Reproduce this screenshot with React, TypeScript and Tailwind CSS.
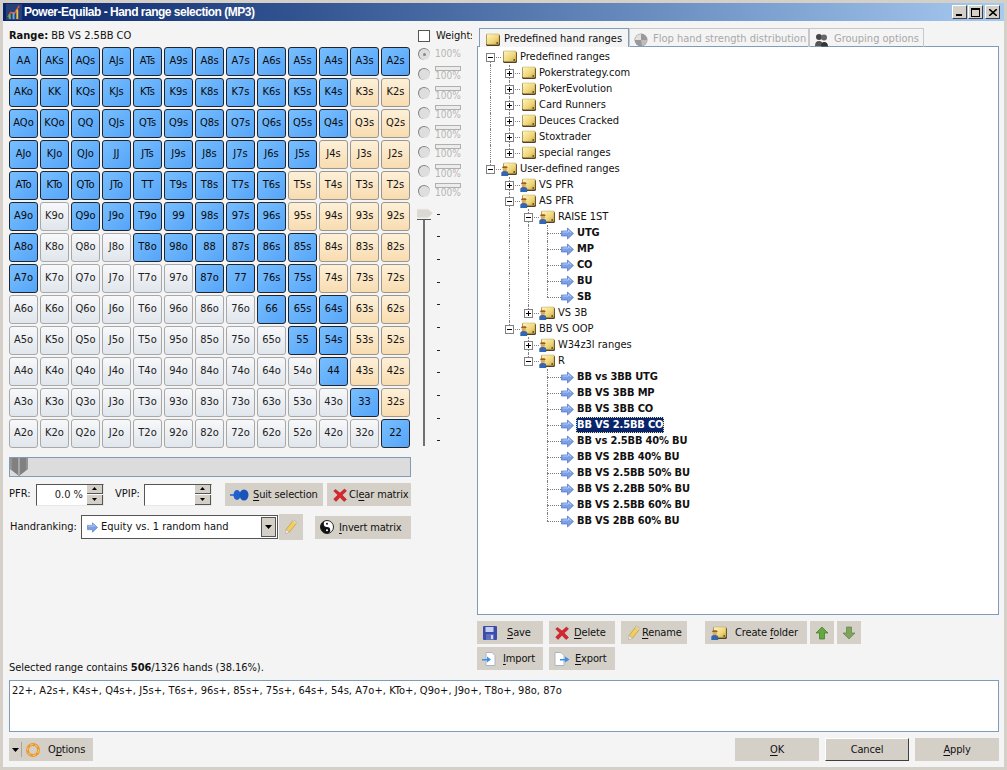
import React from "react";

const RANKS = ["A","K","Q","J","T","9","8","7","6","5","4","3","2"];
const pairMin = 12;
const suitedMax: Record<string, number> = {A:12,K:10,Q:10,J:9,T:8,"9":8,"8":9,"7":9,"6":10,"5":10};
const offMax: Record<string, number> = {A:7,K:4,Q:5,J:5,T:6,"9":6,"8":7};

function handOn(r: number, c: number) {
  if (r === c) return r <= pairMin;
  if (r < c) return c <= (suitedMax[RANKS[r]] ?? -1);
  return r <= (offMax[RANKS[c]] ?? -1);
}

const FONT = "font-['DejaVu_Sans_Condensed','Liberation_Sans',sans-serif]";

function Folder({ user }: { user?: boolean }) {
  return (
    <svg width="17" height="14" viewBox="0 0 17 14" className="shrink-0">
      <defs>
        <linearGradient id="fg" x1="0" y1="0" x2="1" y2="1">
          <stop offset="0" stopColor="#fff4c4" />
          <stop offset="0.6" stopColor="#f0d676" />
          <stop offset="1" stopColor="#c8a850" />
        </linearGradient>
      </defs>
      <path d="M2 1.5 H15 L16 2.5 V12 L15 13 H3 L2 12 Z" fill="#4e4020" />
      <rect x="2.5" y="1" width="12.5" height="10.5" rx="1" fill="url(#fg)" stroke="#b8a060" strokeWidth="0.5" />
      <circle cx="13.2" cy="10" r="0.9" fill="#6a4e18" />
      {user && (
        <g>
          <circle cx="3.8" cy="7" r="2.3" fill="#dca862" />
          <path d="M0.8 6 H6.8 L5.6 4.2 H2 Z" fill="#9a6222" />
          <path d="M0.3 14 V11 Q0.3 9 3.8 9 Q7.2 9 7.2 11 V14 Z" fill="#3566b0" />
        </g>
      )}
    </svg>
  );
}

function BlueArrow({ size = 13 }: { size?: number }) {
  return (
    <svg width={size} height={size} viewBox="0 0 13 13" className="shrink-0">
      <path d="M0.5 4 H6.5 V1 L12.5 6.5 L6.5 12 V9 H0.5 Z" fill="#7a9eea" stroke="#5273b8" strokeWidth="0.7" />
      <path d="M1.5 5 H7.5 V3 L10 5.8" fill="none" stroke="#bcd0f6" strokeWidth="0.9" />
    </svg>
  );
}

function RedX({ size = 14 }: { size?: number }) {
  return (
    <svg width={size} height={size} viewBox="0 0 14 14" className="shrink-0">
      <path d="M2.5 1.5 L7 5 L11.5 1 L13.5 3 L9.2 7 L13.5 11.5 L11 13.5 L7 9.2 L3 13.5 L0.7 11 L4.8 7 L0.7 3 Z" fill="#d8262c" stroke="#a01418" strokeWidth="0.5" />
    </svg>
  );
}

function Pencil() {
  return (
    <svg width="14" height="16" viewBox="0 0 14 16" className="shrink-0">
      <path d="M9.5 1 L13 3.5 L5.5 13 L2 10.5 Z" fill="#f2cf5a" stroke="#b0903a" strokeWidth="0.6" />
      <path d="M2 10.5 L5.5 13 L1.5 15 Z" fill="#f0ece2" stroke="#a9a294" strokeWidth="0.5" />
      <path d="M9.5 1 L13 3.5 L12 5 L8.5 2.4 Z" fill="#d9d3cb" />
    </svg>
  );
}

function Btn({ className, icon, children }: { className: string; icon?: React.ReactNode; children?: React.ReactNode }) {
  return (
    <div className={`h-[23px] bg-[#d4d0c8] flex items-center shrink-0 text-[#111] tracking-[-0.15px] ${className}`}>
      {icon}
      {children && <span className="pt-[2px]">{children}</span>}
    </div>
  );
}

const U = ({ children }: { children: string }) => <span className="underline underline-offset-2">{children}</span>;

function Spin({ value, w }: { value: string; w: string }) {
  return (
    <div className={`h-[22px] ${w} shrink-0 flex bg-white border border-t-[#555] border-l-[#555] border-r-[#e8e8e8] border-b-[#e8e8e8]`}>
      <div className="flex-1 text-right pr-1 leading-[19px] text-[#222]">{value}</div>
      <div className="w-[16px] flex flex-col gap-px bg-white">
        <div className="flex-1 bg-[#d4d0c8] flex items-center justify-center border-r border-b border-[#555]">
          <svg width="5" height="3" viewBox="0 0 5 3"><path d="M2.5 0 L5 3 H0 Z" fill="#000" /></svg>
        </div>
        <div className="flex-1 bg-[#d4d0c8] flex items-center justify-center border-r border-b border-[#555]">
          <svg width="5" height="3" viewBox="0 0 5 3"><path d="M0 0 H5 L2.5 3 Z" fill="#000" /></svg>
        </div>
      </div>
    </div>
  );
}

type Node = { l: number; t: string; k: "f" | "u" | "a"; e?: "+" | "-" };
const TREE: Node[] = [
  { l: 0, t: "Predefined ranges", k: "f", e: "-" },
  { l: 1, t: "Pokerstrategy.com", k: "f", e: "+" },
  { l: 1, t: "PokerEvolution", k: "f", e: "+" },
  { l: 1, t: "Card Runners", k: "f", e: "+" },
  { l: 1, t: "Deuces Cracked", k: "f", e: "+" },
  { l: 1, t: "Stoxtrader", k: "f", e: "+" },
  { l: 1, t: "special ranges", k: "f", e: "+" },
  { l: 0, t: "User-defined ranges", k: "u", e: "-" },
  { l: 1, t: "VS PFR", k: "u", e: "+" },
  { l: 1, t: "AS PFR", k: "u", e: "-" },
  { l: 2, t: "RAISE 1ST", k: "u", e: "-" },
  { l: 3, t: "UTG", k: "a" },
  { l: 3, t: "MP", k: "a" },
  { l: 3, t: "CO", k: "a" },
  { l: 3, t: "BU", k: "a" },
  { l: 3, t: "SB", k: "a" },
  { l: 2, t: "VS 3B", k: "u", e: "+" },
  { l: 1, t: "BB VS OOP", k: "u", e: "-" },
  { l: 2, t: "W34z3l ranges", k: "u", e: "+" },
  { l: 2, t: "R", k: "u", e: "-" },
  { l: 3, t: "BB vs 3BB UTG", k: "a" },
  { l: 3, t: "BB VS 3BB MP", k: "a" },
  { l: 3, t: "BB VS 3BB CO", k: "a" },
  { l: 3, t: "BB VS 2.5BB CO", k: "a" },
  { l: 3, t: "BB vs 2.5BB 40% BU", k: "a" },
  { l: 3, t: "BB VS 2BB 40% BU", k: "a" },
  { l: 3, t: "BB VS 2.5BB 50% BU", k: "a" },
  { l: 3, t: "BB VS 2.2BB 50% BU", k: "a" },
  { l: 3, t: "BB VS 2.5BB 60% BU", k: "a" },
  { l: 3, t: "BB VS 2BB 60% BU", k: "a" },
];

function hasNextSibling(i: number, level: number) {
  for (let j = i + 1; j < TREE.length; j++) {
    if (TREE[j].l < level) return false;
    if (TREE[j].l === level) return true;
  }
  return false;
}

function TreeRow({ i }: { i: number }) {
  const n = TREE[i];
  const selected = n.t === "BB VS 2.5BB CO";
  const cells = [];
  for (let k = 0; k <= n.l; k++) {
    const own = k === n.l;
    const through = hasNextSibling(i, k);
    cells.push(
      <div key={k} className="w-[19px] h-4 relative shrink-0">
        {!own && through && <div className="absolute left-[9px] top-0 h-4 border-l border-dotted border-[#808080]" />}
        {own && (
          <>
            <div className={`absolute left-[9px] border-l border-dotted border-[#808080] ${i === 0 ? "top-2 h-2" : through ? "top-0 h-4" : "top-0 h-2"}`} />
            <div className={`absolute left-[9px] top-2 border-t border-dotted border-[#808080] ${n.k === "a" ? "w-[14px]" : "w-[11px]"}`} />
            {n.e && (
              <div className="absolute left-[5px] top-1 w-[9px] h-[9px] bg-white border border-[#808080] flex items-center justify-center">
                <div className="w-[5px] h-px bg-black relative">
                  {n.e === "+" && <div className="absolute left-[2px] top-[-2px] w-px h-[5px] bg-black" />}
                </div>
              </div>
            )}
          </>
        )}
      </div>
    );
  }
  return (
    <div className="flex h-4 items-center">
      {cells}
      <div className="w-[20px] shrink-0 flex items-center pl-[1px]">
        {n.k === "a" ? <span className="ml-[3px]"><BlueArrow /></span> : <Folder user={n.k === "u"} />}
      </div>
      <span
        className={`whitespace-nowrap leading-4 h-4 ${n.k === "a" ? "font-bold tracking-[-0.15px]" : ""} ${
          selected ? "bg-[#0a246a] text-white outline-1 outline-dotted outline-[#e0e0a0] -outline-offset-1 px-px -mx-px" : "text-[#111]"
        }`}
      >
        {n.t}
      </span>
    </div>
  );
}

function Tab({ label, active, w, icon }: { label: string; active?: boolean; w: string; icon: React.ReactNode }) {
  return (
    <div
      className={`h-[19px] ${w} flex items-center pt-[3px] pl-[4px] border border-b-0 whitespace-nowrap shrink-0 ${
        active ? "gap-[3px] border-[#7f9db9] bg-[#f4f4f4] text-[#111] relative z-10" : "gap-[5px] border-[#c8c8c8] text-[#a8a8a8] mt-[1px]"
      }`}
    >
      {icon}
      {label}
    </div>
  );
}

export default function App() {
  return (
    <div className={`w-[1007px] h-[770px] overflow-hidden flex flex-col bg-[#d4d0c8] text-[11px] ${FONT}`}>
      {/* title bar */}
      <div className="h-[18px] mx-[3px] mt-[3px] shrink-0 flex items-center bg-gradient-to-r from-[#0a246a] to-[#a6caf0]">
        <svg width="16" height="16" viewBox="0 0 17 17" className="ml-[3px] shrink-0">
          <rect width="17" height="17" fill="#27407a" />
          <path d="M2 14 L5 9 L9 10 L14 2" stroke="#e05a3a" strokeWidth="1.6" fill="none" />
          <rect x="3" y="11" width="2" height="5" fill="#5ec05e" />
          <rect x="7" y="9" width="2" height="7" fill="#6ab0e0" />
          <rect x="11" y="6" width="2" height="10" fill="#f0c040" />
        </svg>
        <span className="ml-[2px] text-white font-bold text-[12px] tracking-[-0.5px] font-['Liberation_Sans',sans-serif] whitespace-nowrap">Power-Equilab - Hand range selection (MP3)</span>
        <div className="ml-auto flex items-center gap-px mr-[4px]">
          {["min", "max", "close"].map((b) => (
            <div
              key={b}
              className={`w-[15px] h-[14px] bg-[#d4d0c8] border border-t-white border-l-white border-r-[#404040] border-b-[#404040] flex items-center justify-center ${b === "close" ? "ml-[1px]" : ""}`}
            >
              {b === "min" && <div className="w-[6px] h-[2px] bg-black mt-[6px] mr-[2px]" />}
              {b === "max" && <div className="w-[9px] h-[9px] border border-black border-t-2" />}
              {b === "close" && (
                <svg width="8" height="7" viewBox="0 0 8 7"><path d="M0 0 L8 7 M8 0 L0 7" stroke="#000" strokeWidth="1.6" /></svg>
              )}
            </div>
          ))}
        </div>
      </div>

      {/* client */}
      <div className="flex-1 mx-[3px] mb-[3px] min-h-0 bg-[#f4f4f4] flex flex-col pt-[2px] pl-[6px] pr-[5px]">
        <div className="flex h-[654px] shrink-0">
          {/* left */}
          <div className="w-[468px] shrink-0 flex flex-col">
            <div className="flex">
              <div className="w-[408px] shrink-0">
                <div className="h-[24px] pt-[6px] leading-[14px] text-[#111] whitespace-nowrap">
                  <b>Range:</b> BB VS 2.5BB CO
                </div>
                <div className="grid grid-cols-[repeat(13,29px)] grid-rows-[repeat(13,29px)] gap-[2px]">
                  {RANKS.map((_, r) =>
                    RANKS.map((_, c) => {
                      const name = r === c ? RANKS[r] + RANKS[r] : r < c ? RANKS[r] + RANKS[c] + "s" : RANKS[c] + RANKS[r] + "o";
                      const on = handOn(r, c);
                      const style = on
                        ? "bg-gradient-to-br from-[#78bfff] to-[#55a4f8] border-[#20242c] text-[#0a0a0a]"
                        : r < c
                          ? "bg-gradient-to-b from-[#fdf0d8] to-[#f8dcb0] border-[#9a968e] text-[#111]"
                          : "bg-gradient-to-b from-[#f7f8fa] to-[#e0e6ec] border-[#a8a8a8] text-[#222]";
                      return (
                        <div key={name} className={`w-[29px] h-[29px] rounded-[3px] border flex items-center justify-center ${style}`}>
                          {name}
                        </div>
                      );
                    })
                  )}
                </div>
                <div className="mt-[9px] h-[20px] w-[402px] border border-[#7f9db9] bg-[#dcdcdc] flex">
                  <svg width="19" height="18" viewBox="0 0 19 18" className="shrink-0">
                    <path d="M0 0 H18 V11 L9 18 L0 11 Z" fill="#808080" />
                    <path d="M9 0 V17" stroke="#d0d0d0" strokeWidth="1" />
                    <path d="M1 0 V11 M17 0 V11" stroke="#a8a8a8" strokeWidth="1" />
                  </svg>
                </div>
                <div className="mt-[6px] flex items-center h-[23px]">
                  <span className="w-[27px] shrink-0 text-[#111]">PFR:</span>
                  <Spin value="0.0 %" w="w-[68px]" />
                  <span className="ml-[11px] w-[29px] shrink-0 text-[#111]">VPIP:</span>
                  <Spin value="" w="w-[68px]" />
                  <Btn className="ml-[13px] w-[98px] pl-[5px] gap-[4px]" icon={
                    <svg width="19" height="12" viewBox="0 0 19 12" className="shrink-0">
                      <path d="M0 6 H4" stroke="#2060c8" strokeWidth="1.5" />
                      <ellipse cx="7" cy="6" rx="3.5" ry="5" fill="#1f5fd0" />
                      <ellipse cx="14" cy="6" rx="4.5" ry="5.5" fill="#1a52bc" />
                    </svg>
                  }><span className="whitespace-nowrap"><U>S</U>uit selection</span></Btn>
                  <Btn className="ml-[4px] w-[84px] pl-[6px] gap-[2px]" icon={<RedX />}><span className="whitespace-nowrap">Cl<U>e</U>ar matrix</span></Btn>
                </div>
                <div className="mt-[9px] flex items-center h-[24px]">
                  <span className="w-[72px] shrink-0 pl-[1px] text-[#111]">Handranking:</span>
                  <div className="w-[197px] h-[24px] shrink-0 border border-[#555] bg-white flex items-center">
                    <span className="ml-[5px] mr-[3px]"><BlueArrow size={11} /></span>
                    <span className="flex-1 whitespace-nowrap text-[#111]">Equity vs. 1 random hand</span>
                    <div className="w-[15px] h-[20px] mr-[1px] bg-[#d4d0c8] border border-[#555] flex items-center justify-center">
                      <svg width="7" height="4" viewBox="0 0 7 4"><path d="M0 0 H7 L3.5 4 Z" fill="#000" /></svg>
                    </div>
                  </div>
                  <Btn className="ml-[1px] w-[24px] h-[26px] justify-center" icon={<Pencil />} />
                  <Btn className="ml-[12px] w-[96px] pl-[5px] gap-[5px]" icon={
                    <svg width="14" height="14" viewBox="0 0 14 14" className="shrink-0">
                      <circle cx="7" cy="7" r="6.5" fill="#fff" stroke="#222" />
                      <path d="M7 .5 A6.5 6.5 0 0 0 7 13.5 A3.25 3.25 0 0 0 7 7 A3.25 3.25 0 0 1 7 .5 Z" fill="#111" />
                      <circle cx="7" cy="3.7" r="1" fill="#111" />
                      <circle cx="7" cy="10.3" r="1" fill="#fff" />
                    </svg>
                  }><span className="whitespace-nowrap"><U>I</U>nvert matrix</span></Btn>
                </div>
              </div>
              {/* weights */}
              <div className="w-[60px] shrink-0 pt-[7px] pl-[1px] overflow-hidden">
                <div className="flex items-center gap-[6px] h-[12px]">
                  <div className="w-[12px] h-[12px] bg-white border border-[#555] shrink-0" />
                  <span className="text-[#111] whitespace-nowrap w-[36px] overflow-hidden">Weights</span>
                </div>
                <div className="mt-[4px] flex flex-col gap-[3.5px]">
                  {[0, 1, 2, 3, 4, 5, 6, 7].map((i) => (
                    <div key={i} className="flex items-center gap-[5px] h-[16px]">
                      <div className="w-[12px] h-[12px] rounded-full bg-[#dedede] border-t border-l border-[#808080] flex items-center justify-center shrink-0">
                        {i === 0 && <div className="w-[3px] h-[3px] rounded-full bg-[#888]" />}
                      </div>
                      <div className="w-[26px] text-[10px] leading-[10px] text-[#b4b4b4]">
                        {i !== 0 && <div className="h-[5px] border border-[#b0b0b0] bg-[#ececec]" />}
                        100%
                      </div>
                    </div>
                  ))}
                </div>
                <div className="mt-[9px] flex h-[238px]">
                  <div className="w-[11px] flex flex-col items-center">
                    <svg width="19" height="12" viewBox="0 0 19 12" className="shrink-0 ml-[2px]">
                      <path d="M0 1 H13 L18 5 L13 10 H0 Z" fill="#dcd9d2" stroke="#eee" />
                      <path d="M0 11.5 H16" stroke="#555" strokeWidth="1" />
                    </svg>
                    <div className="w-[2px] h-[226px] bg-[#707070] shrink-0" />
                  </div>
                  <div className="ml-[8px] pt-[6px] flex flex-col justify-between h-[234px]">
                    {Array.from({ length: 11 }).map((_, i) => (
                      <div key={i} className="w-[3px] h-px bg-[#222]" />
                    ))}
                  </div>
                </div>
              </div>
            </div>
            <div className="mt-auto pb-[2px] leading-[14px] text-[#111] whitespace-nowrap tracking-[-0.05px]">
              Selected range contains <b>506</b>/1326 hands (38.16%).
            </div>
          </div>
          {/* right */}
          <div className="flex-1 min-w-0 flex flex-col pt-[6px]">
            <div className="flex ml-[2px] h-[18px] items-end relative z-10">
              <Tab active w="w-[150px]" label="Predefined hand ranges" icon={<Folder />} />
              <Tab w="w-[180px]" label="Flop hand strength distribution" icon={
                <svg width="14" height="14" viewBox="0 0 14 14" className="shrink-0"><circle cx="7" cy="7" r="6.5" fill="#999" /><path d="M1 7 A6 6 0 0 1 7 1 V7 Z" fill="#e0e0e0" /><path d="M7 7 H13 A6 6 0 0 1 8 13 Z" fill="#bcbcbc" /></svg>
              } />
              <Tab w="w-[115px]" label="Grouping options" icon={
                <svg width="15" height="14" viewBox="0 0 15 14" className="shrink-0"><circle cx="5" cy="4" r="3" fill="#444" /><circle cx="10" cy="4.5" r="3" fill="#666" /><path d="M1 13 Q1 8 5 8 Q9 8 9 13 Z" fill="#555" /><path d="M7 13.5 Q7 9 10 9 Q14 9 14 13.5 Z" fill="#333" /></svg>
              } />
            </div>
            <div className="h-[569px] -mt-[1px] border border-[#7f9db9] bg-white pl-[3px] pt-[2px] overflow-hidden">
              {TREE.map((_, i) => <TreeRow key={i} i={i} />)}
            </div>
            <div className="mt-[6px] flex">
              <Btn className="w-[66px] pl-[6px] gap-[10px]" icon={
                <svg width="14" height="14" viewBox="0 0 14 14" className="shrink-0"><rect width="14" height="14" rx="1" fill="#3c4ca8" /><rect x="2.5" y="1" width="8" height="5" fill="#c8d0f0" /><rect x="3" y="8" width="8" height="6" fill="#6070c0" /><rect x="8" y="9" width="2" height="4" fill="#d0d8f0" /></svg>
              }><U>S</U>ave</Btn>
              <Btn className="ml-[6px] w-[66px] pl-[6px] gap-[5px]" icon={<RedX />}><U>D</U>elete</Btn>
              <Btn className="ml-[6px] w-[66px] pl-[6px] gap-[1px]" icon={<Pencil />}><U>R</U>ename</Btn>
              <Btn className="ml-[18px] w-[102px] pl-[6px] gap-[7px]" icon={<Folder user />}><span className="whitespace-nowrap">Create <U>f</U>older</span></Btn>
              <Btn className="ml-[3px] w-[24px] justify-center" icon={
                <svg width="12" height="14" viewBox="0 0 12 14"><path d="M6 1 L12 7 H8.5 V13 H3.5 V7 H0 Z" fill="#62a83e" stroke="#3d7a22" strokeWidth="0.7" /></svg>
              } />
              <Btn className="ml-[3px] w-[24px] justify-center" icon={
                <svg width="12" height="14" viewBox="0 0 12 14"><path d="M6 13 L0 7 H3.5 V1 H8.5 V7 H12 Z" fill="#7ea460" stroke="#5e8444" strokeWidth="0.7" /></svg>
              } />
            </div>
            <div className="mt-[3px] flex">
              <Btn className="w-[66px] pl-[5px] gap-[7px]" icon={
                <svg width="14" height="14" viewBox="0 0 14 14" className="shrink-0"><path d="M4 .5 H10 L13 3.5 V13.5 H4 Z" fill="#fff" stroke="#aab4c8" /><path d="M0 7 H5 V4.5 L9 7.5 L5 10.5 V8.5 H0 Z" fill="#3f8fe0" /></svg>
              }><U>I</U>mport</Btn>
              <Btn className="ml-[6px] w-[66px] pl-[5px] gap-[5px]" icon={
                <svg width="16" height="14" viewBox="0 0 16 14" className="shrink-0"><path d="M1 .5 H7 L10 3.5 V13.5 H1 Z" fill="#fff" stroke="#aab4c8" /><path d="M6 7 H11 V4.5 L15.5 7.5 L11 10.5 V8.5 H6 Z" fill="#3f8fe0" /></svg>
              }><U>E</U>xport</Btn>
            </div>
          </div>
        </div>

        {/* range text */}
        <div className="mt-[3px] h-[52px] border border-[#7f9db9] bg-white pl-[2px] pt-[3px] leading-[14px] text-[#111] whitespace-nowrap overflow-hidden shrink-0 tracking-[0.04px]">
          22+, A2s+, K4s+, Q4s+, J5s+, T6s+, 96s+, 85s+, 75s+, 64s+, 54s, A7o+, KTo+, Q9o+, J9o+, T8o+, 98o, 87o
        </div>

        {/* bottom */}
        <div className="mt-[6px] flex">
          <Btn className="w-[84px] pl-[3px]" icon={
            <>
              <svg width="7" height="4" viewBox="0 0 7 4" className="shrink-0"><path d="M0 0 H7 L3.5 4 Z" fill="#000" /></svg>
              <div className="w-px h-[15px] bg-[#a8a49c] ml-[2px] mr-[3px]" />
              <svg width="16" height="16" viewBox="0 0 16 16" className="shrink-0"><circle cx="8" cy="8" r="5.5" fill="none" stroke="#e8982c" strokeWidth="3" /><circle cx="8" cy="8" r="5.5" fill="none" stroke="#fbd08a" strokeWidth="1" strokeDasharray="3 2.5" /></svg>
            </>
          }><span className="ml-[7px]">O<U>p</U>tions</span></Btn>
          <Btn className="ml-auto w-[84px] justify-center"><U>O</U>K</Btn>
          <Btn className="ml-[6px] w-[84px] justify-center border border-t-white border-l-white border-r-[#404040] border-b-[#404040]">Cancel</Btn>
          <Btn className="ml-[6px] w-[84px] justify-center"><U>A</U>pply</Btn>
        </div>
      </div>
    </div>
  );
}
